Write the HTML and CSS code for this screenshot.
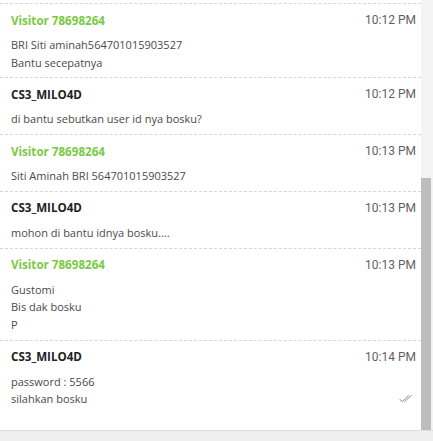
FILE: index.html
```html
<!DOCTYPE html>
<html>
<head>
<meta charset="utf-8">
<link rel="stylesheet" href="styles.css">
</head>
<body>
<div class="frame">
  <div class="main">
    <div class="list">
      <div class="spacer"></div>
      <div class="item">
        <div class="head"><span class="name visitor">Visitor 78698264</span><span class="time">10:12 PM</span></div>
        <div class="msg"><div>BRI Siti aminah564701015903527</div><div>Bantu secepatnya</div></div>
      </div>
      <div class="item">
        <div class="head"><span class="name">CS3_MILO4D</span><span class="time">10:12 PM</span></div>
        <div class="msg"><div>di bantu sebutkan user id nya bosku?</div></div>
      </div>
      <div class="item">
        <div class="head"><span class="name visitor">Visitor 78698264</span><span class="time">10:13 PM</span></div>
        <div class="msg"><div>Siti Aminah BRI 564701015903527</div></div>
      </div>
      <div class="item">
        <div class="head"><span class="name">CS3_MILO4D</span><span class="time">10:13 PM</span></div>
        <div class="msg"><div>mohon di bantu idnya bosku....</div></div>
      </div>
      <div class="item">
        <div class="head"><span class="name visitor">Visitor 78698264</span><span class="time">10:13 PM</span></div>
        <div class="msg"><div>Gustomi</div><div>Bis dak bosku</div><div>P</div></div>
      </div>
      <div class="item last">
        <div class="head"><span class="name">CS3_MILO4D</span><span class="time">10:14 PM</span></div>
        <div class="msg"><div>password : 5566</div><div class="row">silahkan bosku<svg class="check" width="14" height="9" viewBox="0 0 14 9"><path d="M0.8 5.2 L3.2 7.8 L9.6 1.2 M5.4 7.8 L12.6 1.2" fill="none" stroke="#8a8a8a" stroke-width="1"/></svg></div></div>
      </div>
    </div>
    <div class="track"><div class="thumb"></div></div>
  </div>
  <div class="bottom"></div>
</div>
</body>
</html>
```
FILE: styles.css
```css
html, body {
  margin: 0;
  padding: 0;
  background: #fff;
}
.frame {
  width: 433px;
  height: 441px;
  display: flex;
  flex-direction: column;
  overflow: hidden;
}
.main {
  flex: 1;
  display: flex;
  min-height: 0;
}
.list {
  flex: 1;
  display: flex;
  flex-direction: column;
  overflow: hidden;
  font-family: "Open Sans", "Noto Sans", sans-serif;
}
.spacer {
  height: 3px;
  flex: none;
}
.item {
  flex: none;
  border-top: 1px dashed #d6d6d6;
  padding: 7px 5px 6px 11px;
}
.item.last {
  flex: 1;
}
.head {
  display: flex;
  justify-content: space-between;
  align-items: center;
  height: 18px;
}
.name {
  font-weight: 700;
  font-size: 11.6px;
  color: #222;
}
.name.visitor {
  color: #7ac943;
}
.time {
  font-family: Roboto, sans-serif;
  font-size: 12px;
  color: #5f5f5f;
}
.msg {
  margin-top: 7px;
  font-size: 11px;
  line-height: 17.7px;
  color: #4a4a4a;
}
.row {
  display: flex;
  justify-content: space-between;
  align-items: center;
}
.check {
  margin-right: 3px;
  margin-top: -1px;
}
.track {
  width: 12px;
  flex: none;
  background: #f3f3f3;
  display: flex;
  flex-direction: column;
}
.thumb {
  margin-top: 178px;
  width: 10px;
  flex: 1;
  background: #bdbdbd;
}
.bottom {
  height: 10px;
  flex: none;
  border-top: 1px solid #dedede;
  background: #efefef;
}
```
